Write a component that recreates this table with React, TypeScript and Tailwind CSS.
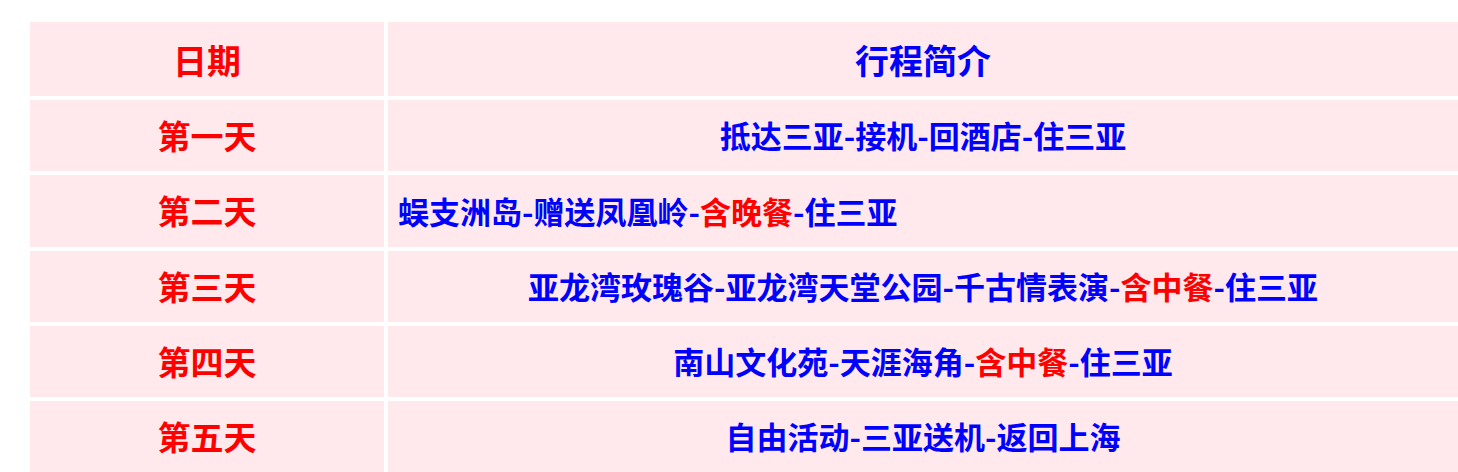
const rows: { day: string; parts: [string, boolean][]; left?: boolean }[] = [
  { day: "第一天", parts: [["抵达三亚-接机-回酒店-住三亚", false]] },
  {
    day: "第二天",
    parts: [
      ["蜈支洲岛-赠送凤凰岭-", false],
      ["含晚餐", true],
      ["-住三亚", false],
    ],
    left: true,
  },
  {
    day: "第三天",
    parts: [
      ["亚龙湾玫瑰谷-亚龙湾天堂公园-千古情表演-", false],
      ["含中餐", true],
      ["-住三亚", false],
    ],
  },
  {
    day: "第四天",
    parts: [
      ["南山文化苑-天涯海角-", false],
      ["含中餐", true],
      ["-住三亚", false],
    ],
  },
  { day: "第五天", parts: [["自由活动-三亚送机-返回上海", false]] },
];

const App = () => {
  return (
    <div className="w-[1458px] h-[472px] overflow-hidden bg-white pl-[30px] pt-[22px] font-['Noto_Sans_CJK_SC',sans-serif] font-bold">
      <div className="grid grid-cols-[354px_1fr] grid-rows-[74px_71px_72px_71px_71px_71px] gap-1">
        {/* Header */}
        <div className="bg-[#ffe9ec] flex items-center justify-center text-[34px] text-[#ff0000]">
          日期
        </div>
        <div className="bg-[#ffe9ec] flex items-center justify-center text-[34px] text-[#0000ff]">
          行程简介
        </div>

        {rows.map((row) => (
          <>
            <div
              key={row.day + "-d"}
              className="bg-[#ffe9ec] flex items-center justify-center text-[33px] text-[#ff0000]"
            >
              {row.day}
            </div>
            <div
              key={row.day + "-p"}
              className={
                row.left
                  ? "bg-[#ffe9ec] flex items-center justify-start pl-[10px] text-[31px] text-[#0000ff]"
                  : "bg-[#ffe9ec] flex items-center justify-center text-[31px] text-[#0000ff]"
              }
            >
              <span className="whitespace-nowrap">
                {row.parts.map(([t, red], i) => (
                  <span key={i} className={red ? "text-[#ff0000]" : ""}>
                    {t}
                  </span>
                ))}
              </span>
            </div>
          </>
        ))}
      </div>
    </div>
  );
};

export default App;
